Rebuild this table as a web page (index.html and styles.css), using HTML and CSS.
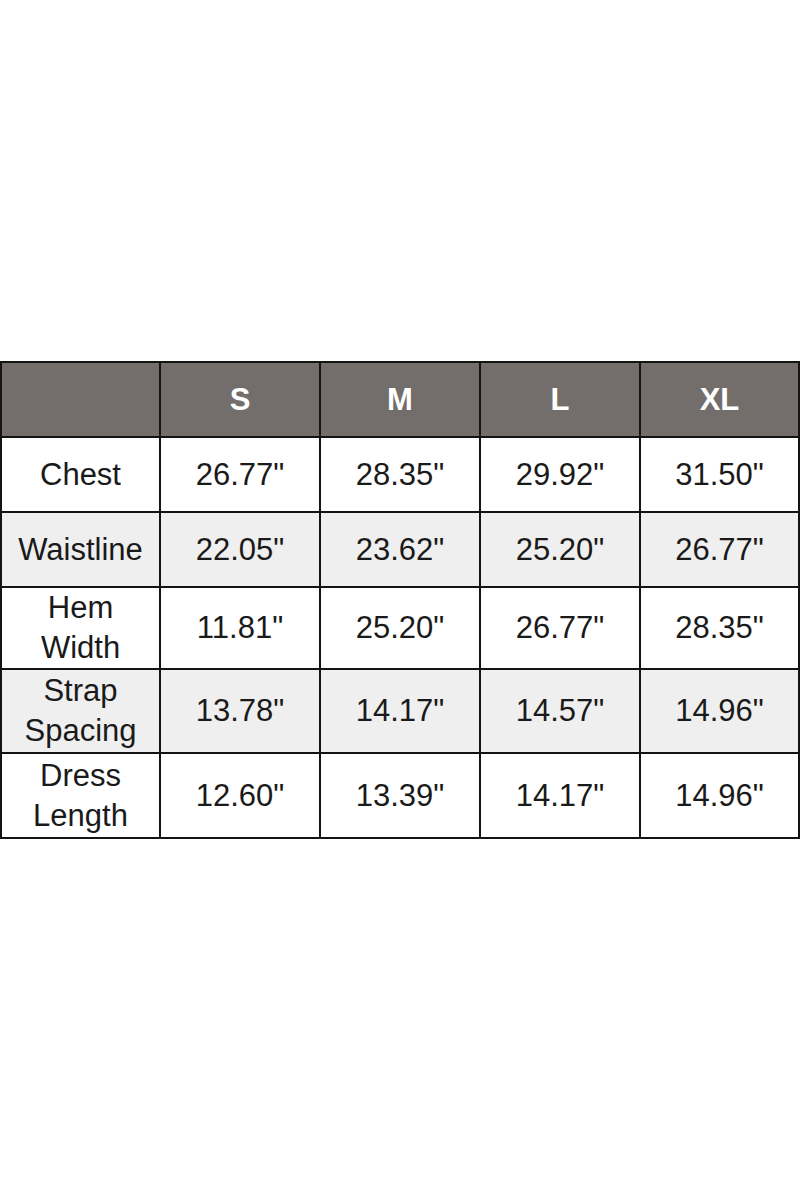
FILE: index.html
```html
<!DOCTYPE html>
<html>
<head>
<meta charset="utf-8">
<link rel="stylesheet" href="styles.css">
</head>
<body>
<table class="size-table">
  <colgroup>
    <col class="c first"><col class="c"><col class="c"><col class="c"><col class="c last">
  </colgroup>
  <thead>
    <tr class="head">
      <th></th><th>S</th><th>M</th><th>L</th><th>XL</th>
    </tr>
  </thead>
  <tbody>
    <tr class="r1"><td>Chest</td><td>26.77"</td><td>28.35"</td><td>29.92"</td><td>31.50"</td></tr>
    <tr class="r1 alt"><td>Waistline</td><td>22.05"</td><td>23.62"</td><td>25.20"</td><td>26.77"</td></tr>
    <tr class="r2"><td>Hem<br>Width</td><td>11.81"</td><td>25.20"</td><td>26.77"</td><td>28.35"</td></tr>
    <tr class="r3 alt"><td>Strap<br>Spacing</td><td>13.78"</td><td>14.17"</td><td>14.57"</td><td>14.96"</td></tr>
    <tr class="r4"><td>Dress<br>Length</td><td>12.60"</td><td>13.39"</td><td>14.17"</td><td>14.96"</td></tr>
  </tbody>
</table>
</body>
</html>
```
FILE: styles.css
```css
html, body {
  margin: 0;
  padding: 0;
  background: #ffffff;
}
.size-table {
  margin-top: 361px;
  width: 798px;
  table-layout: fixed;
  border-collapse: collapse;
  font-family: "Liberation Sans", Arial, sans-serif;
  font-size: 31px;
  color: #1a1a1a;
}
.size-table .c {
  width: 160px;
}
.size-table .first {
  width: 159px;
}
.size-table .last {
  width: 159px;
}
.size-table th,
.size-table td {
  border: 2px solid #141414;
  text-align: center;
  vertical-align: middle;
  padding: 0;
  line-height: 40px;
}
.head th {
  background: #736e6c;
  color: #ffffff;
  font-weight: bold;
  height: 73px;
}
.r1 td { height: 73px; }
.r2 td { height: 80px; }
.r3 td { height: 82px; }
.r4 td { height: 83px; }
.alt td {
  background: #efefef;
}
```
